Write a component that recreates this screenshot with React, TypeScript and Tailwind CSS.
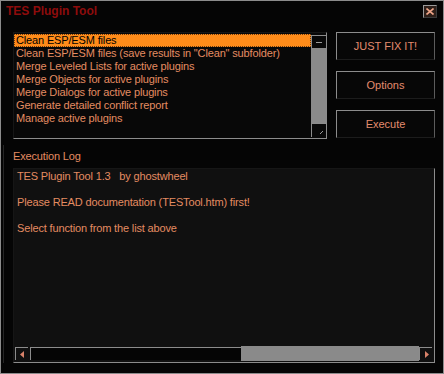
import React from "react";

const items = [
  "Clean ESP/ESM files",
  'Clean ESP/ESM files (save results in "Clean" subfolder)',
  "Merge Leveled Lists for active plugins",
  "Merge Objects for active plugins",
  "Merge Dialogs for active plugins",
  "Generate detailed conflict report",
  "Manage active plugins",
];

const logLines = [
  "TES Plugin Tool 1.3   by ghostwheel",
  "",
  "Please READ documentation (TESTool.htm) first!",
  "",
  "Select function from the list above",
];

const ActionButton: React.FC<{ label: string }> = ({ label }) => (
  <button className="h-[28px] w-full border-t border-l border-r border-b border-t-[#8c8c8c] border-l-[#8c8c8c] border-r-[#5c5c5c] border-b-[#1c1c1c] bg-[#070707] text-[11px] text-[#e48c6e] leading-none">
    {label}
  </button>
);

const ArrowBox: React.FC<{ dir: "left" | "right" }> = ({ dir }) => (
  <div className="w-[13px] h-[13px] border-t border-l border-[#8c8c8c] flex items-center justify-center">
    <svg width="5" height="7" viewBox="0 0 5 7">
      {dir === "left" ? (
        <polygon points="4,0 4,7 0,3.5" fill="#d9826a" />
      ) : (
        <polygon points="1,0 1,7 5,3.5" fill="#d9826a" />
      )}
    </svg>
  </div>
);

export default function App() {
  return (
    <div className="w-[444px] h-[374px] bg-[#050505] border border-[#8c8c8c] flex flex-col font-['Liberation_Sans',Arial,sans-serif] overflow-hidden">
      {/* title bar */}
      <div className="h-[31px] flex items-start pt-[3px] pl-[5px] pr-[6px] justify-between">
        <span className="text-[12px] font-bold leading-[14px] text-[#8e0c0c]">
          TES Plugin Tool
        </span>
        <div className="mt-[1px] w-[14px] h-[13px] border-t border-l border-r border-b border-t-[#9a9a9a] border-l-[#9a9a9a] border-r-[#3a3a3a] border-b-[#3a3a3a] bg-[#2e1f19] flex items-center justify-center">
          <svg width="8" height="7" viewBox="0 0 8 7">
            <path d="M0.5 0.5 L7.5 6.5 M7.5 0.5 L0.5 6.5" stroke="#efa588" strokeWidth="1.6" />
          </svg>
        </div>
      </div>

      {/* list + buttons */}
      <div className="flex h-[107px]">
        <div className="ml-[12px] w-[314px] h-[107px] border-t border-l border-r border-b border-t-[#161616] border-l-[#161616] border-r-[#8c8c8c] border-b-[#8c8c8c] bg-[#080808] flex">
          <div className="flex-1 pt-[1px] text-[11px] leading-[13px] tracking-[-0.15px] text-[#e48c62]">
            {items.map((it, i) => (
              <div
                key={i}
                className={
                  i === 0
                    ? "h-[13px] pl-[1px] bg-[#ff8c1a] text-black border border-dotted border-[#6a3a10] leading-[11px] whitespace-nowrap"
                    : "h-[13px] pl-[2px] whitespace-nowrap"
                }
              >
                {it}
              </div>
            ))}
          </div>
          <div className="w-[15px] pt-[2px] pb-[1px] flex flex-col">
            <div className="h-[13px] border-t border-l border-[#8c8c8c] flex items-center justify-center">
              <div className="w-[6px] h-px bg-[#9a9a9a]" />
            </div>
            <div className="flex-1 bg-[#8a8a8a]" />
            <div className="h-[14px] border-t border-l border-[#8c8c8c] flex items-end justify-end pr-[3px] pb-[3px]">
              <svg width="3" height="3" viewBox="0 0 3 3">
                <path d="M0 3 L3 0" stroke="#9a9a9a" strokeWidth="1" />
              </svg>
            </div>
          </div>
        </div>

        <div className="ml-[9px] w-[99px] flex flex-col gap-[11px]">
          <ActionButton label="JUST FIX IT!" />
          <ActionButton label="Options" />
          <ActionButton label="Execute" />
        </div>
      </div>

      {/* execution log */}
      <div className="ml-[2px] mt-[6px] border-l border-[#262626] flex flex-col">
        <div className="ml-[9px] mt-[5px] text-[11px] leading-[13px] tracking-[-0.15px] text-[#e48c62]">
          Execution Log
        </div>
        <div className="ml-[9px] mt-[5px] w-[422px] h-[195px] border-t border-l border-r border-b border-t-[#161616] border-l-[#161616] border-r-[#8c8c8c] border-b-[#8c8c8c] bg-[#101010] flex flex-col">
          <div className="flex-1 pl-[3px] pt-[1px] text-[11px] leading-[13px] tracking-[-0.15px] text-[#e48c62]">
            {logLines.map((l, i) => (
              <div key={i} className="h-[13px] whitespace-pre">
                {l}
              </div>
            ))}
          </div>
          <div className="h-[15px] mb-[1px] ml-[1px] flex items-center">
            <ArrowBox dir="left" />
            <div className="ml-[2px] w-[211px] h-[13px] border-t border-l border-[#8c8c8c] bg-[#050505]" />
            <div className="w-[178px] h-[15px] bg-[#8a8a8a]" />
            <ArrowBox dir="right" />
          </div>
        </div>
      </div>
    </div>
  );
}
